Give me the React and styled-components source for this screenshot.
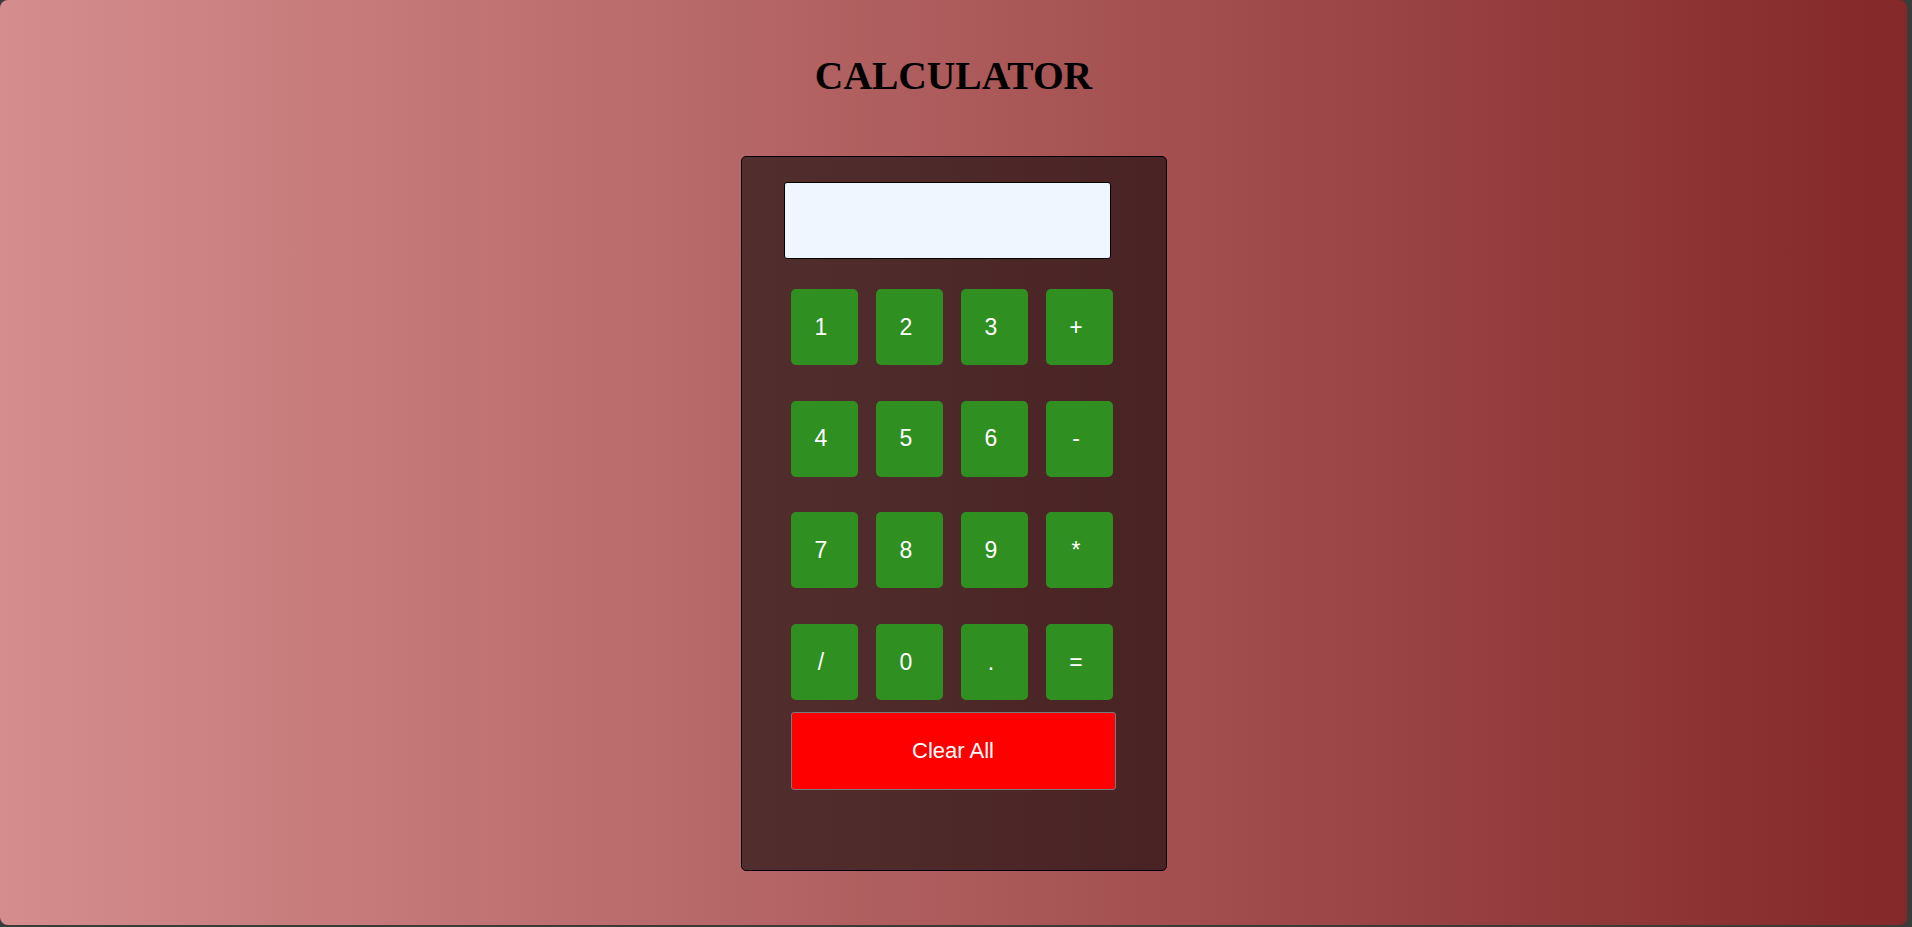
import React, { useState } from 'react'
import styled, { createGlobalStyle } from 'styled-components'

const GlobalStyle = createGlobalStyle`
    html, body {
        margin: 0;
        padding: 0;
        background-color: #3b3b3b;
    }
    * {
        box-sizing: border-box;
    }
`

const Page = styled.div`
    width: 1907px;
    height: 925px;
    border-radius: 8px;
    background: linear-gradient(to right, #d58d8d, #842829);
    display: flex;
    flex-direction: column;
    align-items: center;
    overflow: hidden;
`

const Title = styled.h1`
    margin: 53px 0 57px;
    font-family: 'Liberation Serif', 'Times New Roman', serif;
    font-size: 39.5px;
    font-weight: bold;
    line-height: 46px;
    color: #000;
`

const Calculator = styled.div`
    width: 426px;
    height: 715px;
    padding-top: 25px;
    background-color: rgba(0, 0, 0, 0.55);
    border: 1px solid #000;
    border-radius: 5px;
    display: flex;
    flex-direction: column;
`

const Display = styled.input`
    margin-left: 42px;
    width: 327px;
    height: 77px;
    padding: 0 10px;
    background-color: #eff6ff;
    border: 1px solid #000;
    border-radius: 3px;
    font-family: 'Liberation Sans', Arial, sans-serif;
    font-size: 28px;
    text-align: right;
    outline: none;
`

const Keys = styled.div`
    margin: 30px 0 0 49px;
    display: grid;
    grid-template-columns: repeat(4, 67px);
    grid-auto-rows: 76px;
    column-gap: 18px;
    row-gap: 35.7px;
`

const Key = styled.button`
    border: none;
    border-radius: 5px;
    background-color: #2f8f20;
    color: #fff;
    font-family: 'Liberation Sans', Arial, sans-serif;
    font-size: 23px;
    padding: 0 6px 0 0;
    cursor: pointer;
    display: flex;
    align-items: center;
    justify-content: center;
`

const ClearButton = styled.button`
    margin: 12px 0 0 49px;
    width: 325px;
    height: 78px;
    background-color: #ff0000;
    border: 1px solid #7a7a7a;
    border-radius: 3px;
    color: #fff;
    font-family: 'Liberation Sans', Arial, sans-serif;
    font-size: 22px;
    cursor: pointer;
`

const keys = ['1', '2', '3', '+', '4', '5', '6', '-', '7', '8', '9', '*', '/', '0', '.', '=']

const App = () => {
    const [value, setValue] = useState('')

    const handleKey = (k) => {
        if (k === '=') {
            try {
                // eslint-disable-next-line no-new-func
                setValue(String(Function('return (' + value + ')')()))
            } catch (e) {
                setValue('Error')
            }
            return
        }
        setValue((v) => v + k)
    }

    return (
        <>
            <GlobalStyle />
            <Page>
                <Title>CALCULATOR</Title>
                <Calculator>
                    <Display type='text' value={value} readOnly />
                    <Keys>
                        {keys.map((k) => (
                            <Key key={k} onClick={() => handleKey(k)}>
                                {k}
                            </Key>
                        ))}
                    </Keys>
                    <ClearButton onClick={() => setValue('')}>Clear All</ClearButton>
                </Calculator>
            </Page>
        </>
    )
}

export default App
